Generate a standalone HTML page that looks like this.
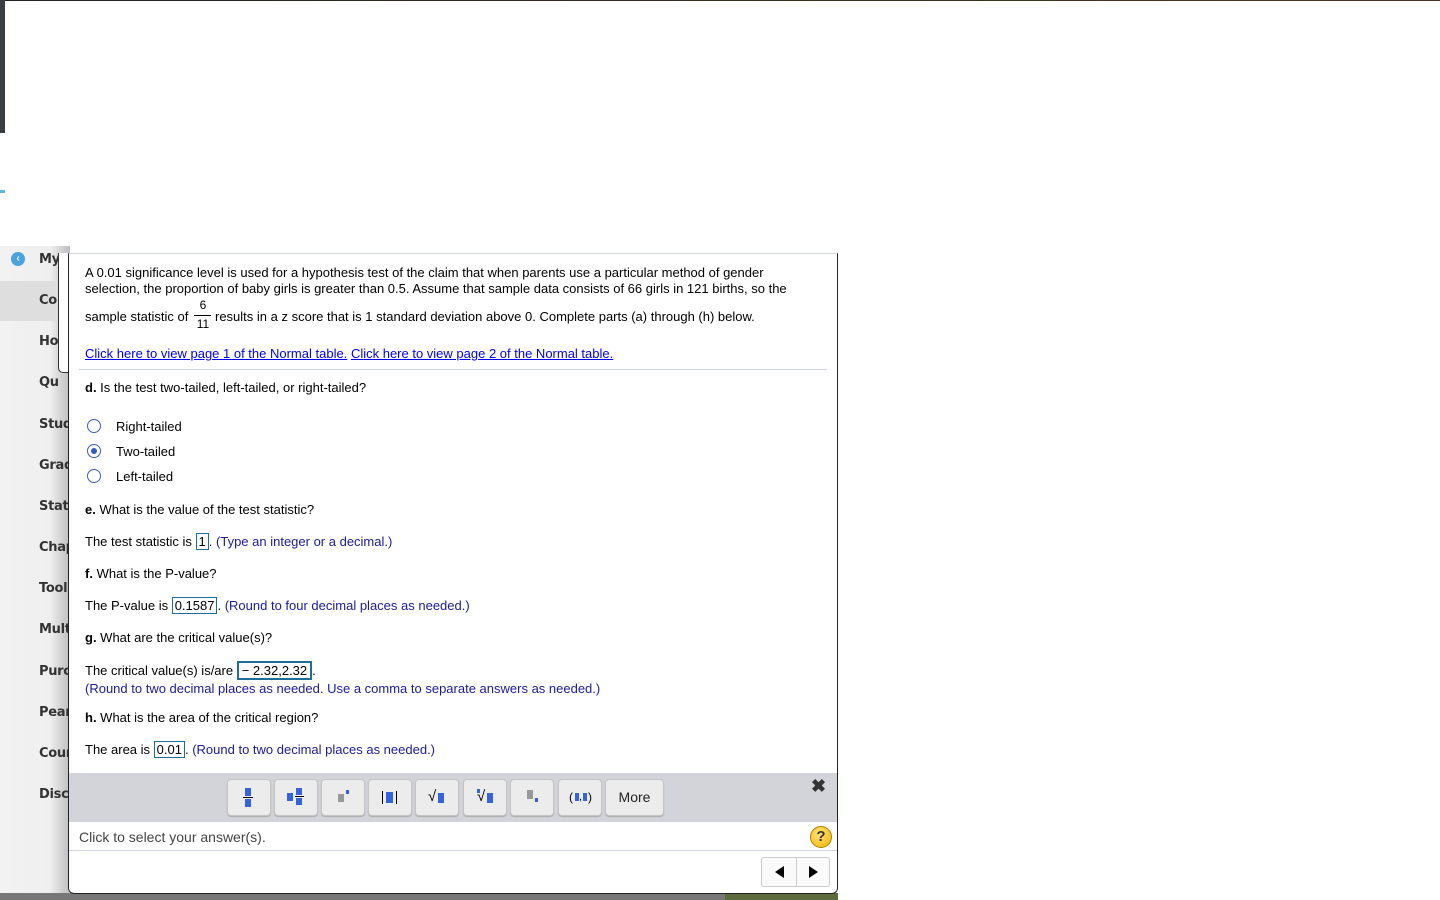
<!DOCTYPE html>
<html><head><meta charset="utf-8"><style>
*{margin:0;padding:0;box-sizing:border-box}
body{width:1440px;height:900px;position:relative;overflow:hidden;background:#fff;font-family:"Liberation Sans",Arial,sans-serif;font-size:13px;color:#000}
.abs{position:absolute}
.side{left:0;top:246px;width:70px;height:647px;background:linear-gradient(to right,#f2f2f2 0,#efefef 50px,#bdbdbd 70px)}
.si{position:absolute;left:39px;font-weight:bold;font-size:13px;color:#333;font-family:"DejaVu Sans","Liberation Sans",sans-serif;white-space:nowrap;overflow:hidden;width:40px;letter-spacing:-0.3px}
.dlg{left:68px;top:253px;width:770px;height:641px;background:#fff;border:1.5px solid #222;border-top:1px solid #cfd3dc;border-radius:0 0 6px 6px;overflow:hidden}
.t{position:absolute;left:16px;white-space:nowrap}
.blue{color:#1a1a9a}
a{color:#0000ee;text-decoration:underline}
.box{border:1px solid #1b6e95;padding:0 2px;display:inline-block;line-height:15px}
.rad{position:absolute;left:18px;width:14px;height:14px;border:1px solid #3c5fb8;border-radius:50%;background:#fff}
.rad.on::after{content:"";position:absolute;left:3px;top:3px;width:6px;height:6px;border-radius:50%;background:#3259c9}
.tb{position:absolute;left:0;top:519px;width:770px;height:49px;background:#d3d4d9}
.btn{position:absolute;top:6px;width:44px;height:37px;background:#ececec;border:1px solid #c4c4c4;border-radius:4px;box-shadow:0 1px 1px #aaa}
.b{position:absolute;background:#3563d9}
.g{position:absolute;background:#999}
</style></head><body>
<div class="abs" style="left:0;top:0;width:1440px;height:1px;background:linear-gradient(to right,#222,#4a3a20)"></div>
<div class="abs" style="left:0;top:0;width:5px;height:133px;background:#3a3d42"></div>
<div class="abs" style="left:0;top:190px;width:5px;height:3px;background:#5bb8dc"></div>
<div class="abs side"></div>
<div class="abs" style="left:0;top:281px;width:68px;height:40px;background:#dedede"></div>
<div class="abs" style="left:11px;top:252px;width:14px;height:14px;border-radius:50%;background:#4aa3df;color:#fff;font-size:10px;line-height:14px;text-align:center;font-weight:bold">‹</div>
<div class="si" style="top:252px">My</div>
<div class="si" style="top:293px">Co</div>
<div class="si" style="top:334px">Ho</div>
<div class="si" style="top:375px">Qu</div>
<div class="si" style="top:417px">Study</div>
<div class="si" style="top:458px">Grad</div>
<div class="si" style="top:499px">StatC</div>
<div class="si" style="top:540px">Chap</div>
<div class="si" style="top:581px">Tools</div>
<div class="si" style="top:622px">Mult</div>
<div class="si" style="top:664px">Purc</div>
<div class="si" style="top:705px">Pears</div>
<div class="si" style="top:746px">Cour</div>
<div class="si" style="top:787px">Discu</div>
<div class="abs" style="left:58px;top:253px;width:12px;height:120px;border-left:1px solid #333;border-bottom:1px solid #333;border-radius:0 0 0 5px;background:#fff"></div>
<div class="abs" style="left:0;top:893px;width:725px;height:7px;background:#777"></div>
<div class="abs" style="left:725px;top:893px;width:113px;height:7px;background:#5d6b3c"></div>
<div class="abs dlg">
<div class="t" style="top:11px">A 0.01 significance level is used for a hypothesis test of the claim that when parents use a particular method of gender</div>
<div class="t" style="top:27px">selection, the proportion of baby girls is greater than 0.5. Assume that sample data consists of 66 girls in 121 births, so the</div>
<div class="t" style="top:55px">sample statistic of</div>
<div class="t" style="left:126px;top:44px;width:16px;text-align:center;font-size:12px">6</div>
<div class="abs" style="left:125px;top:61px;width:17px;height:1px;background:#000"></div>
<div class="t" style="left:126px;top:63px;width:16px;text-align:center;font-size:12px">11</div>
<div class="t" style="left:146px;top:55px">results in a z score that is 1 standard deviation above 0. Complete parts (a) through (h) below.</div>
<div class="t" style="top:92px"><a>Click here to view page 1 of the Normal table.</a> <a>Click here to view page 2 of the Normal table.</a></div>
<div class="abs" style="left:10px;top:115px;width:748px;height:1px;background:#cdd3e0"></div>
<div class="t" style="top:126px"><b>d.</b> Is the test two-tailed, left-tailed, or right-tailed?</div>
<div class="rad" style="top:165px"></div><div class="t" style="left:47px;top:165px">Right-tailed</div>
<div class="rad on" style="top:190px"></div><div class="t" style="left:47px;top:190px">Two-tailed</div>
<div class="rad" style="top:215px"></div><div class="t" style="left:47px;top:215px">Left-tailed</div>
<div class="t" style="top:248px"><b>e.</b> What is the value of the test statistic?</div>
<div class="t" style="top:279px">The test statistic is <span class="box">1</span>. <span class="blue">(Type an integer or a decimal.)</span></div>
<div class="t" style="top:312px"><b>f.</b> What is the P-value?</div>
<div class="t" style="top:343px">The P-value is <span class="box">0.1587</span>. <span class="blue">(Round to four decimal places as needed.)</span></div>
<div class="t" style="top:376px"><b>g.</b> What are the critical value(s)?</div>
<div class="t" style="top:407px">The critical value(s) is/are <span class="box" style="border-width:2px;padding:0 3px">− 2.32,2.32</span>.</div>
<div class="t blue" style="top:427px">(Round to two decimal places as needed. Use a comma to separate answers as needed.)</div>
<div class="t" style="top:456px"><b>h.</b> What is the area of the critical region?</div>
<div class="t" style="top:487px">The area is <span class="box">0.01</span>. <span class="blue">(Round to two decimal places as needed.)</span></div>
<div class="tb">
 <div class="btn" style="left:158px"><div class="b" style="left:17px;top:8px;width:6px;height:8px"></div><div class="abs" style="left:15px;top:17px;width:10px;height:1px;background:#000"></div><div class="b" style="left:17px;top:19px;width:6px;height:8px"></div></div>
 <div class="btn" style="left:205px"><div class="b" style="left:12px;top:13px;width:6px;height:8px"></div><div class="b" style="left:21px;top:8px;width:6px;height:7px"></div><div class="abs" style="left:20px;top:16px;width:9px;height:1px;background:#000"></div><div class="b" style="left:21px;top:18px;width:6px;height:7px"></div></div>
 <div class="btn" style="left:252px"><div class="g" style="left:16px;top:14px;width:6px;height:8px"></div><div class="b" style="left:24px;top:10px;width:3px;height:4px"></div></div>
 <div class="btn" style="left:299px"><div class="abs" style="left:13px;top:11px;width:1px;height:13px;background:#000"></div><div class="b" style="left:17px;top:12px;width:7px;height:11px"></div><div class="abs" style="left:27px;top:11px;width:1px;height:13px;background:#000"></div></div>
 <div class="btn" style="left:346px"><span class="abs" style="left:12px;top:8px;font-size:15px">√</span><div class="b" style="left:22px;top:13px;width:6px;height:10px"></div></div>
 <div class="btn" style="left:394px"><div class="b" style="left:13px;top:9px;width:3px;height:4px"></div><span class="abs" style="left:13px;top:8px;font-size:15px">√</span><div class="b" style="left:23px;top:13px;width:6px;height:10px"></div></div>
 <div class="btn" style="left:441px"><div class="g" style="left:16px;top:10px;width:6px;height:9px"></div><div class="b" style="left:24px;top:18px;width:3px;height:4px"></div></div>
 <div class="btn" style="left:489px"><span class="abs" style="left:10px;top:10px;font-size:12px">(</span><div class="b" style="left:16px;top:13px;width:4px;height:8px"></div><span class="abs" style="left:20px;top:11px;font-size:11px">,</span><div class="b" style="left:24px;top:13px;width:4px;height:8px"></div><span class="abs" style="left:29px;top:10px;font-size:12px">)</span></div>
 <div class="btn" style="left:536px;width:59px;text-align:center;line-height:35px;font-size:14px;color:#222">More</div>
 <div class="abs" style="left:742px;top:3px;font-size:18px;font-weight:bold;color:#333">✖</div>
</div>
<div class="t" style="left:10px;top:575px;font-size:14px;color:#444">Click to select your answer(s).</div>
<div class="abs" style="left:741px;top:572px;width:22px;height:22px;border-radius:50%;background:radial-gradient(circle at 40% 35%,#ffe27a,#f0b400);border:1px solid #b08000;text-align:center;font-weight:bold;font-size:15px;line-height:20px;color:#333">?</div>
<div class="abs" style="left:0;top:596px;width:770px;height:1px;background:#cdd3e0"></div>
<div class="abs" style="left:692px;top:603px;width:69px;height:30px;border:1px solid #ccc;border-radius:3px;background:#fafafa">
 <div class="abs" style="left:34px;top:0;width:1px;height:28px;background:#ccc"></div>
 <div class="abs" style="left:13px;top:8px;width:0;height:0;border-top:6px solid transparent;border-bottom:6px solid transparent;border-right:9px solid #000"></div>
 <div class="abs" style="left:47px;top:8px;width:0;height:0;border-top:6px solid transparent;border-bottom:6px solid transparent;border-left:9px solid #000"></div>
</div>
</div>
</body></html>
